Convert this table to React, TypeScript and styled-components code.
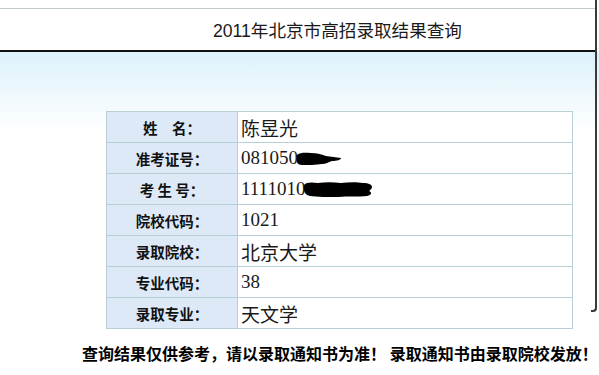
import React from 'react';
import styled, { createGlobalStyle } from 'styled-components';

const GlobalStyle = createGlobalStyle`
  html, body {
    margin: 0;
    padding: 0;
    background: #fff;
  }
`;

const Page = styled.div`
  position: relative;
  width: 599px;
  height: 375px;
  overflow: hidden;
  display: flex;
  flex-direction: column;
  background: #fff;
  font-family: 'Liberation Sans', 'Noto Sans CJK SC', sans-serif;
`;

const TopStrip = styled.div`
  height: 8px;
  width: 596px;
  border-bottom: 1px solid #c4cccc;
`;

const TitleBar = styled.div`
  height: 43px;
  width: 596px;
  display: flex;
  align-items: center;
  padding-left: 213px;
  box-sizing: border-box;
  border-bottom: 2px solid #111;
`;

const Title = styled.h1`
  margin: 0;
  font-size: 17.6px;
  font-weight: normal;
  color: #1a1a1a;
`;

const Body = styled.div`
  flex: 1;
  display: flex;
  flex-direction: column;
  background: linear-gradient(to bottom, #dcf1fb 0px, #eef8fc 40px, #fff 80px, #fff 100%);
`;

const TableWrap = styled.div`
  padding: 59px 0 0 106px;
`;

const ResultTable = styled.table`
  width: 467px;
  border-collapse: collapse;
  table-layout: fixed;
`;

const Row = styled.tr`
  height: 31px;
`;

const LabelCell = styled.td`
  width: 130px;
  padding: 0;
  border: 1px solid #b9cfd6;
  background: #dde9f6;
  text-align: center;
  font-family: 'Noto Sans CJK SC', sans-serif;
  font-weight: bold;
  font-size: 14.5px;
  color: #111;
  white-space: pre;
`;

const ValueCell = styled.td`
  padding: 0 0 0 3px;
  border: 1px solid #b9cfd6;
  background: #fff;
  font-family: 'Liberation Serif', 'Noto Sans CJK SC', serif;
  font-size: 19px;
  color: #1a1a1a;
  white-space: nowrap;
`;

const Scribble = styled.svg`
  vertical-align: -2px;
  margin-left: -2px;
`;

const Notice = styled.p`
  margin: 12px 0 0 82px;
  font-family: 'Noto Sans CJK SC', sans-serif;
  font-weight: bold;
  font-size: 16px;
  color: #000;
  white-space: nowrap;
`;

const WindowEdge = styled.div`
  position: absolute;
  top: 0;
  right: 2px;
  width: 4px;
  height: 310px;
  border-right: 2px solid #3a3a3a;
  border-bottom: 2px solid #3a3a3a;
  border-bottom-right-radius: 4px;
`;

// ink marks covering part of the numbers
const InkShort = () => (
  <Scribble width="46" height="14" viewBox="0 0 46 14">
    <path
      d="M1 3 C5 0 10 1 15 1 C20 1 25 2 30 4 C35 5 40 5 45 6 C45 8 41 9 36 9 C32 10 30 12 26 12 C20 13 12 13 6 13 C2 13 0 10 1 7 Z"
      fill="#000"
    />
  </Scribble>
);

const InkLong = () => (
  <Scribble width="70" height="16" viewBox="0 0 70 16">
    <path
      d="M1 4 C3 1 9 1 15 2 C22 1 30 1 38 2 C46 1 54 1 60 2 C66 2 69 4 69 6 C69 8 67 9 66 10 C69 11 69 14 64 15 C55 16 45 15 35 16 C25 16 14 16 7 15 C2 14 0 10 1 4 Z"
      fill="#000"
    />
  </Scribble>
);

interface Field {
  label: string;
  value: React.ReactNode;
}

const fields: Field[] = [
  { label: '姓　名：', value: '陈昱光' },
  { label: '准考证号：', value: <>081050<InkShort /></> },
  { label: '考 生 号：', value: <>1111010<InkLong /></> },
  { label: '院校代码：', value: '1021' },
  { label: '录取院校：', value: '北京大学' },
  { label: '专业代码：', value: '38' },
  { label: '录取专业：', value: '天文学' },
];

const App: React.FC = () => {
  return (
    <>
      <GlobalStyle />
      <Page>
        <TopStrip />
        <TitleBar>
          <Title>2011年北京市高招录取结果查询</Title>
        </TitleBar>
        <Body>
          <TableWrap>
            <ResultTable>
              <tbody>
                {fields.map(item => (
                  <Row key={item.label}>
                    <LabelCell>{item.label}</LabelCell>
                    <ValueCell>{item.value}</ValueCell>
                  </Row>
                ))}
              </tbody>
            </ResultTable>
          </TableWrap>
          <Notice>查询结果仅供参考，请以录取通知书为准！ 录取通知书由录取院校发放！</Notice>
        </Body>
        <WindowEdge />
      </Page>
    </>
  );
};

export default App;
